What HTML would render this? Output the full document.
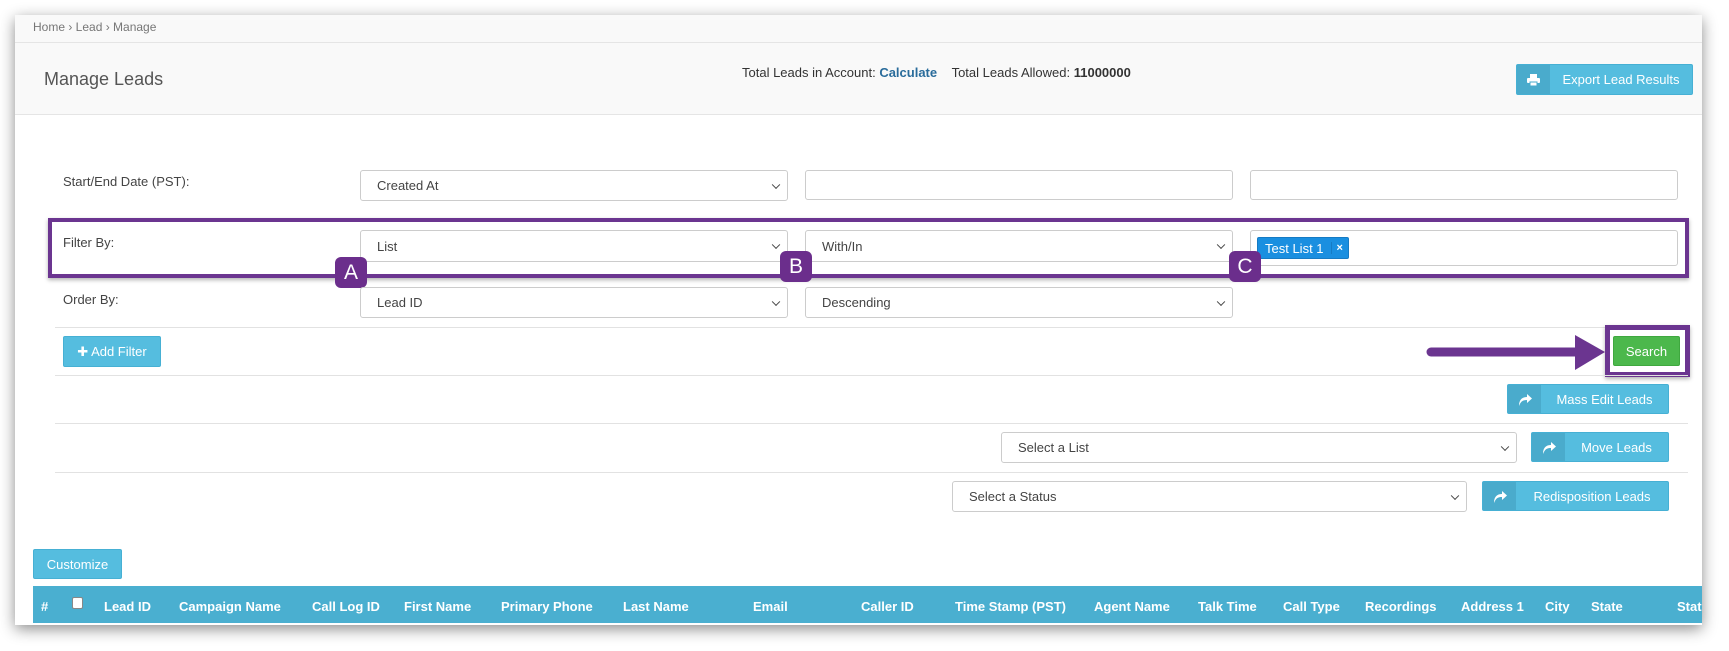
<!DOCTYPE html>
<html><head><meta charset="utf-8"><style>
*{box-sizing:border-box;margin:0;padding:0}
body{width:1729px;height:651px;background:#fff;font-family:"Liberation Sans",sans-serif;position:relative;overflow:hidden;color:#333}
.a{position:absolute}
#panel{left:15px;top:15px;width:1687px;height:610px;background:#fff;box-shadow:0 4px 14px rgba(0,0,0,.45)}
.sel,.inp{position:absolute;border:1px solid #ccc;border-radius:3px;background:#fff;font-size:13px;color:#444;padding-left:16px;display:flex;align-items:center}
.sel:after{content:"";position:absolute;right:8px;top:50%;width:5px;height:5px;border-right:1.5px solid #444;border-bottom:1.5px solid #444;transform:translateY(-70%) rotate(45deg)}
.lbl{position:absolute;font-size:13px;color:#444}
.hr{position:absolute;height:1px;background:#e2e2e2}
.btn{position:absolute;background:#55bddf;border:1px solid #46b0d4;border-radius:2px;color:#fff;font-size:13px;display:flex;align-items:center}
.btn .ic{width:33px;height:100%;background:#4aabcc;display:flex;align-items:center;justify-content:center}
.btn .t{flex:1;text-align:center}
.badge{position:absolute;width:32px;height:31px;background:#6b2e8c;border-radius:6px;color:#fff;font-size:21px;display:flex;align-items:center;justify-content:center}
.th{position:absolute;top:599px;font-size:13px;font-weight:bold;color:#fff}
</style></head><body>
<div id="panel" class="a"></div>
<div class="a" style="left:15px;top:15px;width:1687px;height:28px;background:#f9f9f9;border-bottom:1px solid #e5e5e5"></div>
<div class="a" style="left:33px;top:20px;font-size:12px;color:#777">Home › Lead › Manage</div>
<div class="a" style="left:15px;top:43px;width:1687px;height:72px;background:#f9f9f9;border-bottom:1px solid #e5e5e5"></div>
<div class="a" style="left:44px;top:69px;font-size:18px;color:#555">Manage Leads</div>
<div class="a" style="left:742px;top:65px;font-size:13px;color:#333">Total Leads in Account: <b style="color:#2a6c9b">Calculate</b>&nbsp;&nbsp;&nbsp;&nbsp;Total Leads Allowed: <b>11000000</b></div>
<div class="btn" style="left:1516px;top:64px;width:177px;height:31px"><div class="ic"><svg width="13" height="12" viewBox="0 0 13 12"><rect x="3" y="0" width="7" height="4" fill="#fff"/><rect x="0" y="4" width="13" height="5" rx="1" fill="#fff"/><rect x="3" y="8" width="7" height="4" fill="#fff" stroke="#4aabcc"/></svg></div><div class="t">Export Lead Results</div></div>

<div class="lbl" style="left:63px;top:174px">Start/End Date (PST):</div>
<div class="sel" style="left:360px;top:170px;width:428px;height:31px">Created At</div>
<div class="inp" style="left:805px;top:170px;width:428px;height:30px"></div>
<div class="inp" style="left:1250px;top:170px;width:428px;height:30px"></div>

<div class="a" style="left:48px;top:218px;width:1641px;height:60px;border:4px solid #6b3590;box-shadow:0 2px 4px rgba(0,0,0,.3)"></div>
<div class="lbl" style="left:63px;top:235px">Filter By:</div>
<div class="sel" style="left:360px;top:230px;width:428px;height:32px">List</div>
<div class="sel" style="left:805px;top:230px;width:428px;height:32px">With/In</div>
<div class="inp" style="left:1250px;top:230px;width:428px;height:36px;padding-left:6px"><div style="height:22px;background:#1a8fe0;border:1px solid #167bc4;border-radius:2px;color:#fff;font-size:13px;display:flex;align-items:center"><span style="padding:0 7px">Test List 1</span><span style="border-left:1px solid #167bc4;padding:0 5px;font-size:11px;font-weight:bold">×</span></div></div>
<div class="badge" style="left:335px;top:257px">A</div>
<div class="badge" style="left:780px;top:251px">B</div>
<div class="badge" style="left:1229px;top:251px">C</div>

<div class="lbl" style="left:63px;top:292px">Order By:</div>
<div class="sel" style="left:360px;top:287px;width:428px;height:31px">Lead ID</div>
<div class="sel" style="left:805px;top:287px;width:428px;height:31px">Descending</div>
<div class="hr" style="left:55px;top:327px;width:1633px"></div>

<div class="btn" style="left:63px;top:336px;width:98px;height:31px;justify-content:center">✚ Add Filter</div>
<svg class="a" style="left:1425px;top:333px" width="182" height="40"><line x1="6" y1="19" x2="152" y2="19" stroke="#6b3590" stroke-width="9" stroke-linecap="round"/><polygon points="150,2 180,19 150,37" fill="#6b3590"/></svg>
<div class="a" style="left:1605px;top:325px;width:85px;height:52px;border:5px solid #6b3590;box-shadow:0 2px 4px rgba(0,0,0,.3)"></div>
<div class="a" style="left:1613px;top:336px;width:67px;height:30px;background:#4cb84c;border:1px solid #3fa83f;border-radius:2px;color:#fff;font-size:13px;display:flex;align-items:center;justify-content:center">Search</div>
<div class="hr" style="left:55px;top:375px;width:1633px"></div>

<div class="btn" style="left:1507px;top:384px;width:162px;height:30px"><div class="ic"><svg width="14" height="13" viewBox="0 0 14 13"><path d="M1 13 C1 6 5 4 9 4 L9 1 L14 5.5 L9 10 L9 7 C5 7 3 8 1 13 Z" fill="#fff"/></svg></div><div class="t">Mass Edit Leads</div></div>
<div class="hr" style="left:55px;top:423px;width:1633px"></div>
<div class="sel" style="left:1001px;top:432px;width:516px;height:31px">Select a List</div>
<div class="btn" style="left:1531px;top:432px;width:138px;height:30px"><div class="ic"><svg width="14" height="13" viewBox="0 0 14 13"><path d="M1 13 C1 6 5 4 9 4 L9 1 L14 5.5 L9 10 L9 7 C5 7 3 8 1 13 Z" fill="#fff"/></svg></div><div class="t">Move Leads</div></div>
<div class="hr" style="left:55px;top:472px;width:1633px"></div>
<div class="sel" style="left:952px;top:481px;width:515px;height:31px">Select a Status</div>
<div class="btn" style="left:1482px;top:481px;width:187px;height:30px"><div class="ic"><svg width="14" height="13" viewBox="0 0 14 13"><path d="M1 13 C1 6 5 4 9 4 L9 1 L14 5.5 L9 10 L9 7 C5 7 3 8 1 13 Z" fill="#fff"/></svg></div><div class="t">Redisposition Leads</div></div>

<div class="btn" style="left:33px;top:549px;width:89px;height:30px;justify-content:center">Customize</div>
<div class="a" style="left:33px;top:586px;width:1669px;height:37px;background:#4aafd0"></div>
<div class="th" style="left:41px">#</div>
<div class="a" style="left:72px;top:597px;width:11px;height:12px;background:#fff;border:1px solid #888;border-radius:2px"></div>
<div class="th" style="left:104px">Lead ID</div>
<div class="th" style="left:179px">Campaign Name</div>
<div class="th" style="left:312px">Call Log ID</div>
<div class="th" style="left:404px">First Name</div>
<div class="th" style="left:501px">Primary Phone</div>
<div class="th" style="left:623px">Last Name</div>
<div class="th" style="left:753px">Email</div>
<div class="th" style="left:861px">Caller ID</div>
<div class="th" style="left:955px">Time Stamp (PST)</div>
<div class="th" style="left:1094px">Agent Name</div>
<div class="th" style="left:1198px">Talk Time</div>
<div class="th" style="left:1283px">Call Type</div>
<div class="th" style="left:1365px">Recordings</div>
<div class="th" style="left:1461px">Address 1</div>
<div class="th" style="left:1545px">City</div>
<div class="th" style="left:1591px">State</div>
<div class="th" style="left:1677px;width:25px;overflow:hidden;white-space:nowrap">Status</div>
</body></html>
